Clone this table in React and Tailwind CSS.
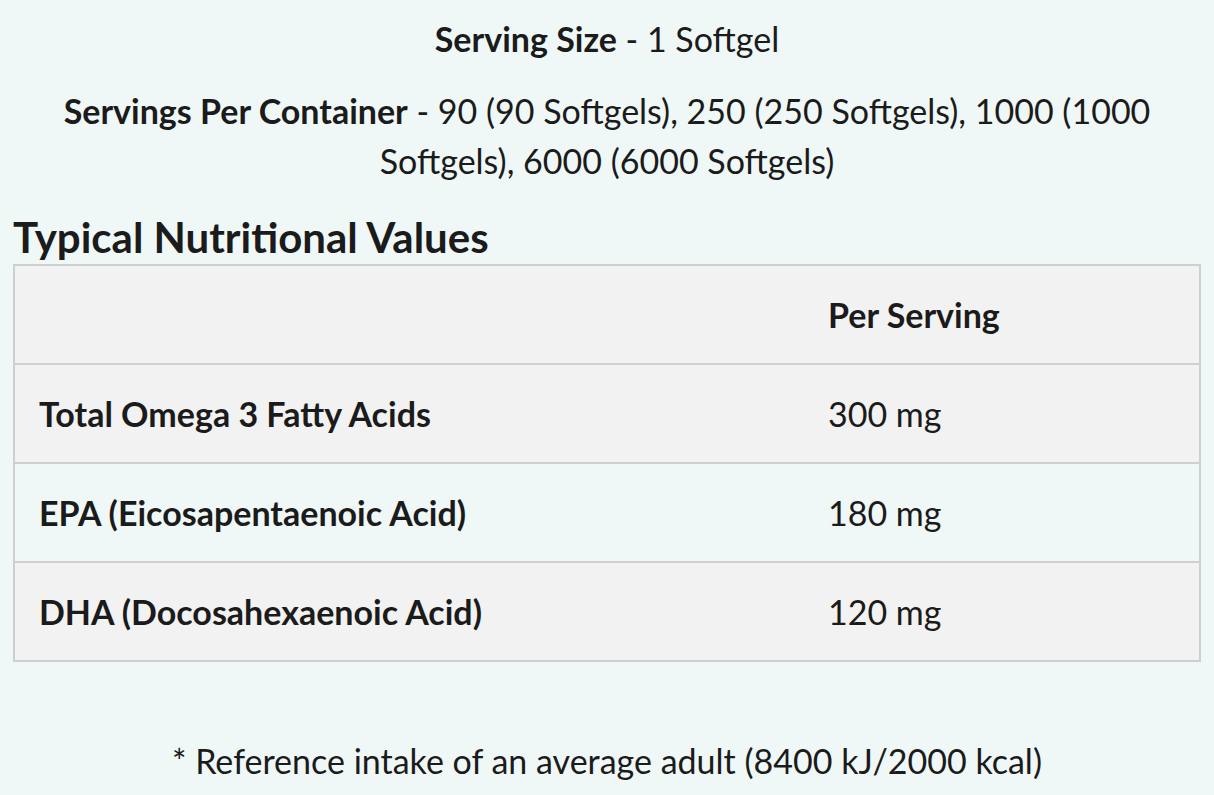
import React from "react";

const rows = [
  { name: "Total Omega 3 Fatty Acids", value: "300 mg", tint: "bg-[#f2f2f2]" },
  { name: "EPA (Eicosapentaenoic Acid)", value: "180 mg", tint: "bg-[#eff8f7]" },
  { name: "DHA (Docosahexaenoic Acid)", value: "120 mg", tint: "bg-[#f2f2f2]" },
];

const App = () => {
  return (
    <div className="min-h-[795px] bg-[#eff8f7] px-[13px] pt-[14px] text-[#1b1b1b] font-['Lato',sans-serif]">
      {/* serving info */}
      <p className="text-center text-[34px] leading-[50px]">
        <strong className="font-bold">Serving Size</strong> - 1 Softgel
      </p>
      <p className="mt-[22px] text-center text-[34px] leading-[50px] px-[24px]">
        <strong className="font-bold">Servings Per Container</strong> - 90 (90 Softgels), 250 (250 Softgels), 1000 (1000 Softgels), 6000 (6000 Softgels)
      </p>

      <h2 className="mt-[26px] mb-[2px] text-[42px] leading-[50px] font-bold">Typical Nutritional Values</h2>

      {/* table */}
      <table className="w-full border-collapse border-2 border-[#cfcfcf] text-[34px]">
        <thead>
          <tr className="bg-[#f2f2f2] h-[99px]">
            <th className="w-[790px] border-b-2 border-[#cfcfcf]"></th>
            <th className="text-left font-bold px-[24px] border-b-2 border-[#cfcfcf]">Per Serving</th>
          </tr>
        </thead>
        <tbody>
          {rows.map((row, i) => (
            <tr key={i} className={`${row.tint} h-[99px] border-b-2 border-[#cfcfcf]`}>
              <td className="px-[24px] font-bold">{row.name}</td>
              <td className="px-[24px]">{row.value}</td>
            </tr>
          ))}
        </tbody>
      </table>

      <p className="mt-[74px] text-center text-[34px] leading-[50px]">
        * Reference intake of an average adult (8400 kJ/2000 kcal)
      </p>
    </div>
  );
};

export default App;
